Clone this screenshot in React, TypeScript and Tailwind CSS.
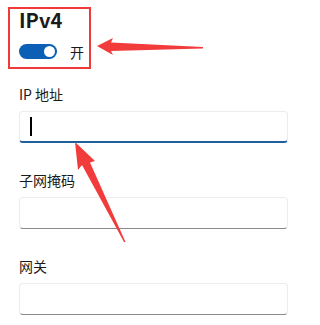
import React from "react";

function Field({ label, focused }: { label: string; focused?: boolean }) {
  return (
    <div className="flex flex-col">
      <div className="text-[14px] leading-[20px] text-[#1b1b1b]">{label}</div>
      <div
        className={
          focused
            ? "mt-[7px] h-[32px] w-[269px] rounded-[4px] border border-[#ececec] border-b-2 border-b-[#1f5f9c] bg-white flex items-center pl-[10px]"
            : "mt-[7px] h-[32px] w-[269px] rounded-[4px] border border-[#ececec] border-b-[#8a8a8a] bg-white"
        }
      >
        {focused && <div className="w-[1.5px] h-[19px] bg-black" />}
      </div>
    </div>
  );
}

export default function App() {
  return (
    <div
      className="relative w-[308px] h-[325px] overflow-hidden bg-white"
      style={{ fontFamily: '"Noto Sans CJK SC", "Noto Sans", sans-serif' }}
    >
      <div className="flex flex-col px-[19px] pt-[6px]">
        <div className="text-[20px] leading-[28px] font-semibold text-[#1b1b1b]">IPv4</div>
        <div className="mt-[10px] flex items-center h-[15px]">
          <div className="w-[38px] h-[15px] rounded-full bg-[#0b5fb5] flex items-center justify-end pr-[2px]">
            <div className="w-[11px] h-[11px] rounded-full bg-white" />
          </div>
          <span className="ml-[13px] text-[14px] leading-[16px] text-[#1b1b1b]">开</span>
        </div>
        <div className="mt-[25px] flex flex-col gap-[27px]">
          <Field label="IP 地址" focused />
          <Field label="子网掩码" />
          <Field label="网关" />
        </div>
      </div>

      <div className="absolute left-[8px] top-[7px] w-[83px] h-[62px] border-2 border-[#f03a3a] pointer-events-none" />

      <svg className="absolute inset-0 pointer-events-none" width="308" height="325" viewBox="0 0 308 325">
        <polygon points="97,46 113,38 111,42.5 203,47 203,48.5 111,51 113,55" fill="#f23c3c" />
        <polygon points="75,142 95,161 90,162.5 125.5,242 124,242 82,165 78,170" fill="#f23c3c" />
      </svg>
    </div>
  );
}
